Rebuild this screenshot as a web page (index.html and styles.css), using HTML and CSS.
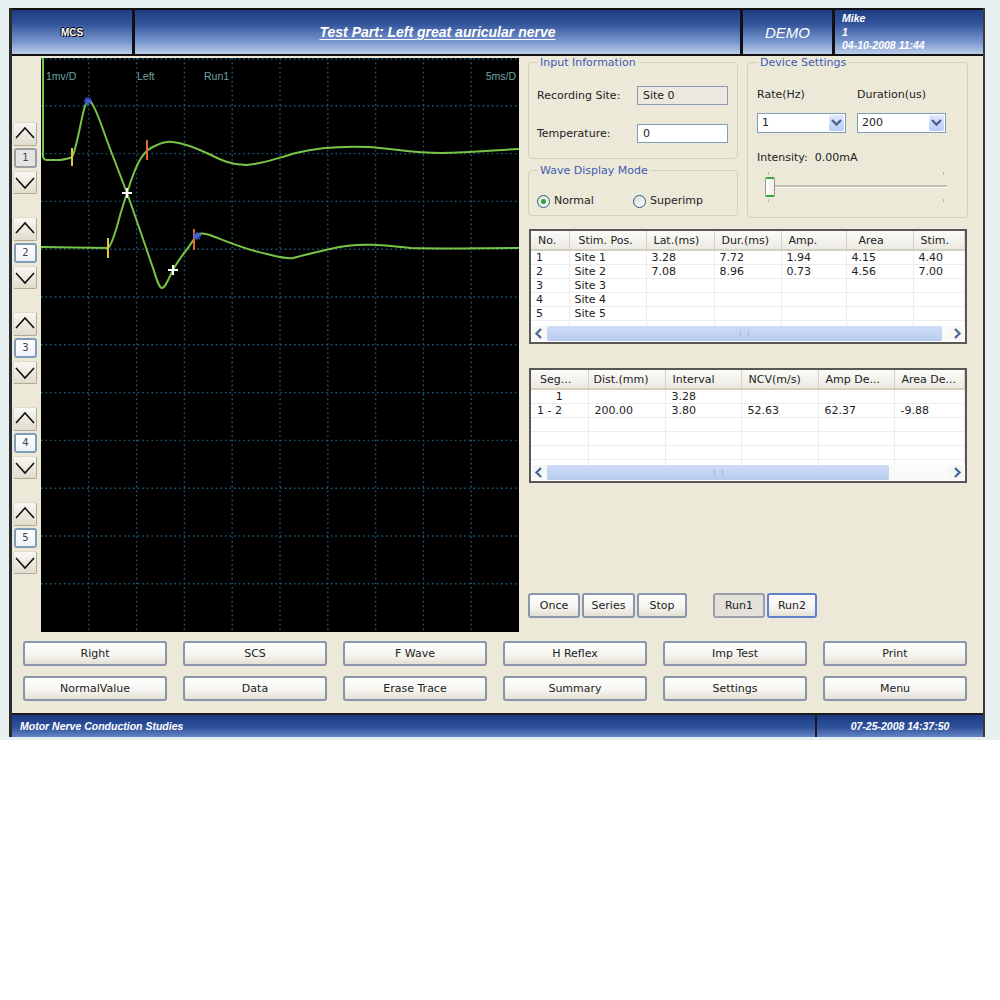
FILE: index.html
```html
<!DOCTYPE html>
<html>
    <head>
        <title>Motor Nerve Conduction Studies</title>
        <meta charset="utf-8"/>
        <link rel="stylesheet" href="styles.css">
    </head>
    <body>
        <div class="frame">
        <div class="window">
            <header class="topbar">
                <div class="cell mcs">MCS</div>
                <div class="cell title"><span>Test Part: Left great auricular nerve</span></div>
                <div class="cell demo">DEMO</div>
                <div class="cell user">
                    <div>Mike</div>
                    <div>1</div>
                    <div>04-10-2008 11:44</div>
                </div>
            </header>
            <main class="main">
                <div class="upper">
                    <div class="channels">
                        <div class="chan">
                            <button class="arrow"><svg viewBox="0 0 22 22"><polyline points="2,15 11,5 20,15"/></svg></button>
                            <div class="num sel">1</div>
                            <button class="arrow down"><svg viewBox="0 0 22 22"><polyline points="2,6 11,16 20,6"/></svg></button>
                        </div>
                        <div class="chan">
                            <button class="arrow"><svg viewBox="0 0 22 22"><polyline points="2,15 11,5 20,15"/></svg></button>
                            <div class="num">2</div>
                            <button class="arrow down"><svg viewBox="0 0 22 22"><polyline points="2,6 11,16 20,6"/></svg></button>
                        </div>
                        <div class="chan">
                            <button class="arrow"><svg viewBox="0 0 22 22"><polyline points="2,15 11,5 20,15"/></svg></button>
                            <div class="num">3</div>
                            <button class="arrow down"><svg viewBox="0 0 22 22"><polyline points="2,6 11,16 20,6"/></svg></button>
                        </div>
                        <div class="chan">
                            <button class="arrow"><svg viewBox="0 0 22 22"><polyline points="2,15 11,5 20,15"/></svg></button>
                            <div class="num">4</div>
                            <button class="arrow down"><svg viewBox="0 0 22 22"><polyline points="2,6 11,16 20,6"/></svg></button>
                        </div>
                        <div class="chan">
                            <button class="arrow"><svg viewBox="0 0 22 22"><polyline points="2,15 11,5 20,15"/></svg></button>
                            <div class="num">5</div>
                            <button class="arrow down"><svg viewBox="0 0 22 22"><polyline points="2,6 11,16 20,6"/></svg></button>
                        </div>
                    </div>

                    <svg class="scope" width="478" height="574" viewBox="0 0 478 574">
                        <rect width="478" height="574" fill="#000"/>
                        <path class="gridlines" d="M0 1H478 M47.8 0V574 M95.6 0V574 M143.4 0V574 M191.2 0V574 M239 0V574 M286.8 0V574 M334.6 0V574 M382.4 0V574 M430.2 0V574 M0 47.8H478 M0 95.6H478 M0 143.4H478 M0 191.2H478 M0 239H478 M0 286.8H478 M0 334.6H478 M0 382.4H478 M0 430.2H478 M0 478H478 M0 525.8H478"/>
                        <text class="lbl" x="5" y="22">1mv/D</text>
                        <text class="lbl" x="96" y="22">Left</text>
                        <text class="lbl" x="163" y="22">Run1</text>
                        <text class="lbl" x="475" y="22" text-anchor="end">5ms/D</text>
                        <!-- site 1 -->
                        <path class="trace" d="M2 0V99 Q3 102 6 102 L19 102 Q27 101 31 99 C36 90 40 60 44 48 Q47 40 50 44 C56 52 62 72 68 88 L86 135 C95 160 105 190 112 210 C116 222 118 230 121 230 C124 230 127 222 132 212 C138 200 148 190 155 178 C158 174 163 175 169 177 C185 183 205 192 226 196 C238 199 245 201 252 200 C265 197 285 191 305 188 C330 185 345 188 370 190 C400 191 440 190 478 190"/>
                        <!-- site 2 -->
                        <path class="trace" d="M0 189 L67 190 C72 186 76 168 80 154 L86 135 C90 122 95 108 100 100 C104 94 108 90 114 88 C120 85 126 83 132 84 C142 85 155 90 168 96 C180 102 190 107 205 107 C222 106 236 100 255 95 C275 90 300 88 326 89 C350 90 370 95 400 95 C430 95 455 92 478 91"/>
                        <path class="tick-y" d="M31 90V108 M67 180V200"/>
                        <path class="tick-o" d="M106 82V102 M153 171V192"/>
                        <path class="star" d="M43 43H51 M47 39V47 M44 40L50 46 M50 40L44 46 M152 178H160 M156 174V182 M153 175L159 181 M159 175L153 181"/>
                        <path class="cross" d="M81 135H91 M86 130V140 M127 212H137 M132 207V217"/>
                    </svg>

                    <div class="panel">
                        <div class="settings">
                            <div class="left-col">
                                <fieldset class="group">
                                    <legend>Input Information</legend>
                                    <div class="field first">
                                        <label>Recording Site:</label>
                                        <input class="readonly" type="text" value="Site 0" readonly>
                                    </div>
                                    <div class="field second">
                                        <label>Temperature:</label>
                                        <input type="text" value="0">
                                    </div>
                                </fieldset>
                                <fieldset class="group wave">
                                    <legend>Wave Display Mode</legend>
                                    <div class="radios">
                                        <span class="radio-item normal"><span class="radio on"></span>Normal</span>
                                        <span class="radio-item"><span class="radio"></span>Superimp</span>
                                    </div>
                                </fieldset>
                            </div>
                            <fieldset class="group device">
                                <legend>Device Settings</legend>
                                <div class="dev-labels">
                                    <span>Rate(Hz)</span>
                                    <span>Duration(us)</span>
                                </div>
                                <div class="selects">
                                    <div class="select">1<span class="drop"><svg viewBox="0 0 10 10"><polyline points="2,3 5,6 8,3"/></svg></span></div>
                                    <div class="select">200<span class="drop"><svg viewBox="0 0 10 10"><polyline points="2,3 5,6 8,3"/></svg></span></div>
                                </div>
                                <div class="intensity">Intensity:<span>0.00mA</span></div>
                                <div class="slider">
                                    <span class="mark m1"></span>
                                    <span class="mark m2"></span>
                                    <span class="mark m3"></span>
                                    <span class="mark m4"></span>
                                    <div class="track"></div>
                                    <div class="thumb"></div>
                                </div>
                            </fieldset>
                        </div>

                        <div class="grid sites">
                            <div class="rows">
                                <table>
                                    <thead>
                                        <tr>
                                            <th class="w38">No.</th><th class="w77 pos">Stim. Pos.</th><th class="w68">Lat.(ms)</th><th class="w67">Dur.(ms)</th><th class="w65">Amp.</th><th class="w67 area">Area</th><th>Stim.</th>
                                        </tr>
                                    </thead>
                                    <tbody>
                                        <tr><td>1</td><td>Site 1</td><td>3.28</td><td>7.72</td><td>1.94</td><td>4.15</td><td>4.40</td></tr>
                                        <tr><td>2</td><td>Site 2</td><td>7.08</td><td>8.96</td><td>0.73</td><td>4.56</td><td>7.00</td></tr>
                                        <tr><td>3</td><td>Site 3</td><td></td><td></td><td></td><td></td><td></td></tr>
                                        <tr><td>4</td><td>Site 4</td><td></td><td></td><td></td><td></td><td></td></tr>
                                        <tr><td>5</td><td>Site 5</td><td></td><td></td><td></td><td></td><td></td></tr>
                                        <tr><td></td><td></td><td></td><td></td><td></td><td></td><td></td></tr>
                                    </tbody>
                                </table>
                            </div>
                            <div class="hscroll">
                                <span class="arr"><svg viewBox="0 0 10 10"><polyline points="6,2 3,5 6,8"/></svg></span>
                                <span class="bar wide"><i></i></span>
                                <span class="rest"></span>
                                <span class="arr"><svg viewBox="0 0 10 10"><polyline points="4,2 7,5 4,8"/></svg></span>
                            </div>
                        </div>

                        <div class="grid segs">
                            <div class="rows">
                                <table>
                                    <thead>
                                        <tr>
                                            <th class="w57 seg">Seg...</th><th class="w77 tight">Dist.(mm)</th><th class="w76">Interval</th><th class="w77">NCV(m/s)</th><th class="w76">Amp De...</th><th>Area De...</th>
                                        </tr>
                                    </thead>
                                    <tbody>
                                        <tr><td class="mid">1</td><td></td><td>3.28</td><td></td><td></td><td></td></tr>
                                        <tr><td>1 - 2</td><td>200.00</td><td>3.80</td><td>52.63</td><td>62.37</td><td>-9.88</td></tr>
                                        <tr><td></td><td></td><td></td><td></td><td></td><td></td></tr>
                                        <tr><td></td><td></td><td></td><td></td><td></td><td></td></tr>
                                        <tr><td></td><td></td><td></td><td></td><td></td><td></td></tr>
                                        <tr><td></td><td></td><td></td><td></td><td></td><td></td></tr>
                                    </tbody>
                                </table>
                            </div>
                            <div class="hscroll">
                                <span class="arr"><svg viewBox="0 0 10 10"><polyline points="6,2 3,5 6,8"/></svg></span>
                                <span class="bar short"><i></i></span>
                                <span class="rest"></span>
                                <span class="arr"><svg viewBox="0 0 10 10"><polyline points="4,2 7,5 4,8"/></svg></span>
                            </div>
                        </div>

                        <div class="runs">
                            <button class="btn b52">Once</button>
                            <button class="btn b53">Series</button>
                            <button class="btn b50">Stop</button>
                            <button class="btn b52 pressed run1">Run1</button>
                            <button class="btn b50 focus">Run2</button>
                        </div>
                    </div>
                </div>

                <div class="actions">
                    <button class="btn">Right</button>
                    <button class="btn">SCS</button>
                    <button class="btn">F Wave</button>
                    <button class="btn">H Reflex</button>
                    <button class="btn">Imp Test</button>
                    <button class="btn">Print</button>
                    <button class="btn">NormalValue</button>
                    <button class="btn">Data</button>
                    <button class="btn">Erase Trace</button>
                    <button class="btn">Summary</button>
                    <button class="btn">Settings</button>
                    <button class="btn">Menu</button>
                </div>
            </main>
            <footer class="status">
                <div class="stat-cell left">Motor Nerve Conduction Studies</div>
                <div class="stat-cell right">07-25-2008 14:37:50</div>
            </footer>
        </div>
        </div>
    </body>
</html>
```

FILE: styles.css
```css
body{
    margin:0;
    background:#fff;
    font-family:"DejaVu Sans", Verdana, sans-serif;
    font-size:11px;
    color:#222;
}
.frame{
    background:#e8f1f2;
    padding:8px 0 3px 0;
}
.window{
    width:976px;
    margin-left:9px;
    box-sizing:border-box;
    border-left:3px solid #2a2a2a;
    border-right:2px solid #3a3a3a;
}

/* top title bar */
.topbar{
    display:flex;
    gap:3px;
    height:48px;
    box-sizing:border-box;
    padding:2px 0;
    background:#111;
}
.cell{
    background:linear-gradient(#1f3d82 0%, #31529a 30%, #7896cd 72%, #bccde9 100%);
    color:#fff;
    display:flex;
    align-items:center;
    justify-content:center;
    font-family:"Liberation Sans", Arial, sans-serif;
}
.mcs{
    width:120px;
    font-size:10px;
    font-weight:bold;
    text-shadow:1px 1px 0 #000, -1px 0 0 #000, 0 -1px 0 #000;
}
.title{
    flex:1;
    font-size:14px;
    font-weight:bold;
    font-style:italic;
}
.title span{
    text-decoration:underline;
    text-underline-offset:2px;
}
.demo{
    width:89px;
    font-size:15px;
    font-style:italic;
}
.user{
    width:148px;
    box-sizing:border-box;
    display:block;
    padding:2px 0 0 7px;
    font-size:10.5px;
    font-weight:bold;
    font-style:italic;
    line-height:13.5px;
}

/* main area */
.main{
    background:#ece9d8;
    padding-bottom:12px;
}
.upper{
    display:flex;
    height:576px;
}
.channels{
    width:29px;
    box-sizing:border-box;
    padding:66px 0 0 1px;
    display:flex;
    flex-direction:column;
    gap:23px;
}
.arrow{
    display:block;
    width:24px;
    height:24px;
    padding:0;
    border:1px solid #dedac9;
    border-right-color:#aeaa94;
    border-bottom-color:#aeaa94;
    border-radius:2px;
    background:linear-gradient(#f8f7f3, #e1ddcd);
}
.arrow.down{
    height:23px;
    margin-top:3px;
}
.arrow svg{
    display:block;
    width:22px;
    height:22px;
}
.arrow polyline{
    fill:none;
    stroke:#111;
    stroke-width:1.6;
}
.num{
    width:19px;
    height:16px;
    margin:2px 0 0 1px;
    border:2px solid #7f9db9;
    border-radius:3px;
    background:linear-gradient(#fff, #eef2f8);
    text-align:center;
    line-height:16px;
    font-size:10px;
    color:#444;
}
.num.sel{
    border-color:#9c9ca4;
    background:#e4e4e4;
}

/* scope */
.scope{
    display:block;
    margin-top:2px;
    flex:none;
}
.gridlines{
    fill:none;
    stroke:#1f5a78;
    stroke-width:1.4;
    stroke-dasharray:1.6 3;
}
.lbl{
    font-family:"Liberation Sans", Arial, sans-serif;
    font-size:10.5px;
    fill:#6fa6a2;
}
.trace{
    fill:none;
    stroke:#78c447;
    stroke-width:2;
    stroke-linejoin:round;
}
.tick-y{ stroke:#e7c23a; stroke-width:2; }
.tick-o{ stroke:#e0682a; stroke-width:2; }
.star{ stroke:#3f5fe0; stroke-width:1.3; }
.cross{ stroke:#fff; stroke-width:2; }

/* right panel */
.panel{
    width:440px;
    margin-left:9px;
    display:flex;
    flex-direction:column;
}
.settings{
    display:flex;
    gap:9px;
}
.left-col{
    width:210px;
    display:flex;
    flex-direction:column;
    gap:5px;
}
.group{
    margin:0;
    padding:0 8px;
    min-width:0;
    border:1px solid #d4d0be;
    border-radius:4px;
}
.group legend{
    color:#4159b3;
    font-size:11px;
    line-height:13px;
    padding:0 2px;
    margin-left:1px;
}
.field{
    display:flex;
    align-items:center;
}
.field label{
    width:100px;
}
.field input{
    width:91px;
    height:19px;
    box-sizing:border-box;
    border:1px solid #7f9db9;
    padding:0 5px;
    font-family:"DejaVu Sans", Verdana, sans-serif;
    font-size:11px;
    color:#222;
    background:#fff;
}
.field input.readonly{
    background:#ebe9df;
    border-color:#8d9cb2;
}
.field.first{ margin-top:17px; }
.field.second{ margin-top:19px; padding-bottom:15px; }
.radios{
    display:flex;
    margin-top:17px;
    padding-bottom:7px;
    line-height:14px;
}
.radio-item{
    display:flex;
    align-items:center;
    gap:4px;
}
.radio-item.normal{
    width:96px;
}
.radio{
    width:11px;
    height:11px;
    border:1px solid #2c5a8a;
    border-radius:50%;
    background:linear-gradient(135deg, #dcdcd4, #fff);
    position:relative;
}
.radio.on::after{
    content:'';
    position:absolute;
    left:3px;
    top:3px;
    width:5px;
    height:5px;
    border-radius:50%;
    background:#2fa33a;
}
.device{
    width:221px;
    box-sizing:border-box;
    padding:0 8px 0 9px;
}
.dev-labels{
    display:flex;
    margin-top:19px;
    line-height:13px;
}
.dev-labels span{
    width:100px;
}
.selects{
    display:flex;
    gap:11px;
    margin-top:12px;
}
.select{
    width:89px;
    height:20px;
    box-sizing:border-box;
    border:1px solid #7f9db9;
    background:#fff;
    padding-left:4px;
    line-height:18px;
    display:flex;
    justify-content:space-between;
}
.drop{
    width:15px;
    margin:1px;
    border-radius:2px;
    background:linear-gradient(#dfe8fd, #b8cbf5);
}
.drop svg{
    display:block;
    width:15px;
    height:16px;
}
.drop polyline{
    fill:none;
    stroke:#4b6288;
    stroke-width:1.6;
}
.intensity{
    margin-top:18px;
    line-height:13px;
}
.intensity span{
    margin-left:7px;
}
.slider{
    position:relative;
    height:30px;
    box-sizing:border-box;
    padding-top:13px;
    margin-top:8px;
    margin-bottom:15px;
}
.track{
    margin:0 12px 0 16px;
    height:2px;
    background:#c3bfac;
    border-bottom:1px solid #fff;
}
.thumb{
    position:absolute;
    left:8px;
    top:5px;
    width:8px;
    height:16px;
    border:1px solid #9c9a90;
    border-top:2px solid #3ea53e;
    border-bottom:2px solid #3ea53e;
    border-radius:2px;
    background:linear-gradient(90deg, #fff, #eeede6);
}
.mark{
    position:absolute;
    width:1px;
    height:3px;
    background:#bcb8a6;
}
.m1{ left:11px; top:0; }
.m2{ left:11px; top:27px; }
.m3{ left:186px; top:0; }
.m4{ left:186px; top:27px; }

/* list views */
.grid{
    width:438px;
    margin:11px 0 0 1px;
    height:115px;
    box-sizing:border-box;
    border:2px solid #575757;
    background:#fff;
    display:flex;
    flex-direction:column;
}
.grid.segs{
    margin-top:24px;
}
.rows{
    flex:1;
    overflow:hidden;
}
.grid table{
    width:100%;
    border-collapse:collapse;
    table-layout:fixed;
    font-size:11px;
}
.grid th{
    box-sizing:border-box;
    height:19px;
    padding:0 0 0 7px;
    font-weight:normal;
    text-align:left;
    white-space:nowrap;
    overflow:hidden;
    background:linear-gradient(#fbfbf9, #ebe9e1);
    border-right:1px solid #d6d3c6;
    border-bottom:2px solid #d3d0c2;
    color:#222;
}
.grid th.pos{ padding-left:9px; }
.grid th.seg{ padding-left:9px; }
.grid th.tight{ padding-left:5px; }
.grid th.area{ padding-left:12px; }
.grid td{
    box-sizing:border-box;
    height:14px;
    line-height:13px;
    padding:0 0 0 5px;
    border-right:1px solid #ececec;
    border-bottom:1px solid #ececec;
    white-space:nowrap;
    overflow:hidden;
    color:#222;
}
.segs td{ padding-left:6px; }
.grid td.mid{
    text-align:center;
    padding-left:0;
}
.w38{ width:38px; }
.w57{ width:57px; }
.w65{ width:65px; }
.w67{ width:67px; }
.w68{ width:68px; }
.w76{ width:76px; }
.w77{ width:77px; }
.hscroll{
    display:flex;
    height:15px;
    margin:0 1px 1px 1px;
    background:#f6f5f1;
}
.arr{
    width:15px;
    flex:none;
    background:#f7f7f4;
}
.arr svg{
    display:block;
    width:15px;
    height:15px;
}
.arr polyline{
    fill:none;
    stroke:#4d6a9c;
    stroke-width:1.6;
}
.bar{
    flex:none;
    border-radius:2px;
    background:linear-gradient(#cfdcf7, #b8cbef);
    display:flex;
    align-items:center;
    justify-content:center;
}
.bar i{
    width:7px;
    height:5px;
    border-left:1px solid #9fb3dc;
    border-right:1px solid #9fb3dc;
}
.bar.wide{ width:395px; }
.bar.short{ width:342px; }
.rest{
    flex:1;
    background:#fafaf8;
}

/* buttons */
.btn{
    height:25px;
    padding:0;
    border:2px solid #8b95ab;
    border-radius:3px;
    background:linear-gradient(#ffffff, #f5f4ef 60%, #e3e0d4);
    font-family:"DejaVu Sans", Verdana, sans-serif;
    font-size:11px;
    color:#222;
}
.runs{
    display:flex;
    gap:2px;
    margin-top:110px;
}
.b50{ width:50px; }
.b52{ width:52px; }
.b53{ width:53px; }
.run1{ margin-left:24px; }
.btn.pressed{
    background:#e3e1d9;
    border-color:#9b9fab;
}
.btn.focus{
    border-color:#6281cc;
}
.actions{
    display:grid;
    grid-template-columns:repeat(6, 144px);
    column-gap:16px;
    row-gap:10px;
    padding-left:11px;
    margin-top:9px;
}

/* status bar */
.status{
    display:flex;
    gap:2px;
    height:24px;
    box-sizing:border-box;
    padding-top:2px;
    background:#1c1c1c;
}
.stat-cell{
    background:linear-gradient(#1b3a82, #2f519c 55%, #6485c4);
    color:#fff;
    font-family:"Liberation Sans", Arial, sans-serif;
    font-size:10.5px;
    font-weight:bold;
    font-style:italic;
    line-height:22px;
}
.stat-cell.left{
    flex:1;
    padding-left:8px;
}
.stat-cell.right{
    width:166px;
    text-align:center;
}
```
